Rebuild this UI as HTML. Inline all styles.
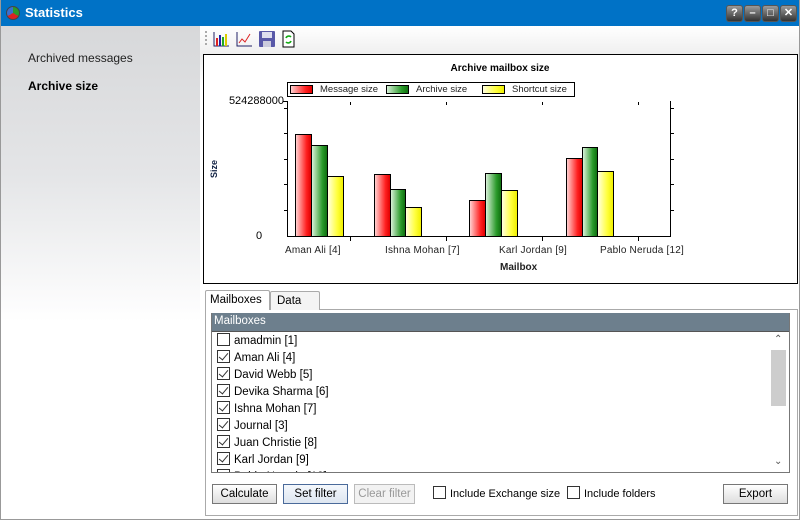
<!DOCTYPE html>
<html><head><style>
*{margin:0;padding:0;box-sizing:border-box}
body{width:800px;height:520px;overflow:hidden;font-family:"Liberation Sans",sans-serif;font-size:11px;color:#000;background:#fff;position:relative}
.a{position:absolute;white-space:nowrap}
#win{left:0;top:0;width:800px;height:520px;border:1px solid #999;border-top:none}
#title{left:0;top:0;width:800px;height:26px;background:#0072c6;color:#fff;font-weight:bold;font-size:13px}
#left{left:1px;top:26px;width:199px;height:493px;background:linear-gradient(#d7d8da 0%,#e4e5e7 30%,#fff 60%)}
#right{left:200px;top:26px;width:599px;height:493px;background:linear-gradient(#fff,#eee 30px,#fff 60px)}
.tb{width:17px;height:17px;top:5px;border-radius:3px;background:linear-gradient(#9a9a9a,#333);border:1px solid #555;color:#fff;font-size:11px;font-weight:bold;text-align:center;line-height:15px}
.bar{position:absolute;border:1px solid #000}
.r{background:linear-gradient(90deg,#ffd0d0,#ff2020 70%,#e00000)}
.g{background:linear-gradient(90deg,#d8f0d8,#2a9a2a 70%,#107010)}
.y{background:linear-gradient(90deg,#ffffe0,#ffff40 60%,#f0f000)}
.row{position:absolute;height:17px;font-size:11.5px;line-height:18px;white-space:nowrap}
.cb{display:inline-block;width:13px;height:13px;border:1px solid #333;vertical-align:-2px;margin-right:4px;background:#fff;position:relative}
.ck::after{content:"";position:absolute;left:3px;top:0px;width:4px;height:8px;border:solid #333;border-width:0 1px 1px 0;transform:rotate(40deg)}
.btn{position:absolute;top:484px;height:20px;border:1px solid #777;background:linear-gradient(#fff,#ddd);text-align:center;line-height:19px;font-size:11.5px;white-space:nowrap}
.tk{position:absolute;background:#000}
.lg{font-size:9.5px;color:#222;top:0}
</style></head><body>
<div id="title" class="a">
 <div class="a" style="left:6px;top:6px;width:14px;height:14px;border-radius:50%;background:conic-gradient(#2a9a2a 0 120deg,#d22 120deg 240deg,#3a6fd0 240deg);border:1px solid #444"></div>
 <div class="a" style="left:25px;top:5px">Statistics</div>
 <div class="a tb" style="left:726px">?</div>
 <div class="a tb" style="left:744px">–</div>
 <div class="a tb" style="left:762px">□</div>
 <div class="a tb" style="left:780px">✕</div>
</div>
<div id="left" class="a">
 <div class="a" style="left:27px;top:25px;font-size:12px;color:#222">Archived messages</div>
 <div class="a" style="left:27px;top:53px;font-size:12px;font-weight:bold">Archive size</div>
</div>
<div id="right" class="a"></div>
<div id="win" class="a"></div>
<div class="a" style="left:205px;top:31px;width:2px;height:14px;border-left:2px dotted #aaa"></div>
<svg class="a" style="left:213px;top:30px" width="90" height="18">
 <path d="M1 2V16H16" stroke="#226" fill="none"/>
 <rect x="3" y="8" width="2" height="8" fill="#d22"/><rect x="6" y="5" width="2" height="11" fill="#22a"/><rect x="9" y="7" width="2" height="9" fill="#2a2"/><rect x="12" y="4" width="2" height="12" fill="#dc0"/>
 <path d="M24 2V16H39" stroke="#226" fill="none"/><path d="M26 13L29 9L32 12L37 4" stroke="#d22" fill="none"/>
 <rect x="46" y="1" width="16" height="16" fill="#5858a8" rx="1"/><rect x="49" y="2" width="10" height="6" fill="#dde"/><rect x="50" y="11" width="8" height="6" fill="#ccd"/>
 <path d="M70 1H78L81 4V17H70Z" fill="#fff" stroke="#000"/><path d="M73 8A3 3 0 0 1 78 7M78 11A3 3 0 0 1 73 12" stroke="#1a1" stroke-width="1.6" fill="none"/>
</svg>
<div class="a" style="left:203px;top:54px;width:595px;height:230px;border:1px solid #000;background:#fff"></div>
<div class="a" style="left:400px;top:63px;width:200px;text-align:center;font-weight:bold;font-size:10px">Archive mailbox size</div>
<div class="a" style="left:287px;top:82px;width:288px;height:15px;border:1px solid #000;line-height:13px">
 <span class="a r" style="left:2px;top:2px;width:23px;height:9px;border:1px solid #000"></span><span class="a lg" style="left:32px">Message size</span>
 <span class="a g" style="left:98px;top:2px;width:23px;height:9px;border:1px solid #000"></span><span class="a lg" style="left:128px">Archive size</span>
 <span class="a y" style="left:194px;top:2px;width:23px;height:9px;border:1px solid #000"></span><span class="a lg" style="left:224px">Shortcut size</span>
</div>
<div class="a" style="left:216px;top:95px;width:68px;text-align:right;font-size:11px">524288000</div>
<div class="a" style="left:256px;top:230px;font-size:11px">0</div>
<div class="a" style="left:205px;top:164px;transform:rotate(-90deg);font-size:9px;font-weight:bold;color:#124">Size</div>
<div class="a" style="left:287px;top:101px;width:384px;height:136px;border-left:1px solid #000;border-bottom:1px solid #000;border-right:1px solid #000"></div>
<div class="tk" style="left:283px;top:101px;width:4px;height:1px"></div>
<div class="tk" style="left:284px;top:108px;width:3px;height:1px"></div><div class="tk" style="left:671px;top:108px;width:3px;height:1px"></div>
<div class="tk" style="left:284px;top:133px;width:3px;height:1px"></div><div class="tk" style="left:671px;top:133px;width:3px;height:1px"></div>
<div class="tk" style="left:284px;top:159px;width:3px;height:1px"></div><div class="tk" style="left:671px;top:159px;width:3px;height:1px"></div>
<div class="tk" style="left:284px;top:184px;width:3px;height:1px"></div><div class="tk" style="left:671px;top:184px;width:3px;height:1px"></div>
<div class="tk" style="left:284px;top:210px;width:3px;height:1px"></div><div class="tk" style="left:671px;top:210px;width:3px;height:1px"></div>
<div class="tk" style="left:350px;top:237px;width:1px;height:4px"></div><div class="tk" style="left:446px;top:237px;width:1px;height:4px"></div>
<div class="tk" style="left:542px;top:237px;width:1px;height:4px"></div><div class="tk" style="left:638px;top:237px;width:1px;height:4px"></div>
<div class="tk" style="left:350px;top:102px;width:1px;height:3px"></div><div class="tk" style="left:446px;top:102px;width:1px;height:3px"></div>
<div class="tk" style="left:542px;top:102px;width:1px;height:3px"></div><div class="tk" style="left:638px;top:102px;width:1px;height:3px"></div>
<div class="bar r" style="left:295px;top:134px;width:17px;height:103px"></div>
<div class="bar g" style="left:311px;top:145px;width:17px;height:92px"></div>
<div class="bar y" style="left:327px;top:176px;width:17px;height:61px"></div>
<div class="bar r" style="left:374px;top:174px;width:17px;height:63px"></div>
<div class="bar g" style="left:390px;top:189px;width:16px;height:48px"></div>
<div class="bar y" style="left:405px;top:207px;width:17px;height:30px"></div>
<div class="bar r" style="left:469px;top:200px;width:17px;height:37px"></div>
<div class="bar g" style="left:485px;top:173px;width:17px;height:64px"></div>
<div class="bar y" style="left:501px;top:190px;width:17px;height:47px"></div>
<div class="bar r" style="left:566px;top:158px;width:17px;height:79px"></div>
<div class="bar g" style="left:582px;top:147px;width:16px;height:90px"></div>
<div class="bar y" style="left:597px;top:171px;width:17px;height:66px"></div>
<div class="a" style="left:285px;top:245px;font-size:10px;color:#222;letter-spacing:0.2px">Aman Ali [4]</div>
<div class="a" style="left:385px;top:245px;font-size:10px;color:#222;letter-spacing:0.2px">Ishna Mohan [7]</div>
<div class="a" style="left:499px;top:245px;font-size:10px;color:#222;letter-spacing:0.2px">Karl Jordan [9]</div>
<div class="a" style="left:600px;top:245px;font-size:10px;color:#222;letter-spacing:0.2px">Pablo Neruda [12]</div>
<div class="a" style="left:500px;top:262px;font-size:10px;font-weight:bold;color:#222">Mailbox</div>
<div class="a" style="left:205px;top:309px;width:593px;height:207px;border:1px solid #aaa;background:#fff"></div>
<div class="a" style="left:270px;top:291px;width:50px;height:19px;border:1px solid #aaa;border-bottom:none;border-radius:2px 2px 0 0;background:#f4f4f4;font-size:11.5px;padding:3px 0 0 6px">Data</div>
<div class="a" style="left:205px;top:290px;width:65px;height:20px;border:1px solid #aaa;border-bottom:none;border-radius:2px 2px 0 0;background:#fff;font-size:11.5px;padding:3px 0 0 4px">Mailboxes</div>
<div class="a" style="left:211px;top:313px;width:579px;height:160px;border:1px solid #777;background:#fff"></div>
<div class="a" style="left:212px;top:313px;width:577px;height:18px;background:#6d7f8d;color:#fff;font-size:11.5px;padding:2px 0 0 2px">Mailboxes</div>
<div class="a" style="left:212px;top:331px;width:577px;height:1px;background:#555"></div>
<div class="a" style="left:771px;top:350px;width:15px;height:56px;background:#cdcdcd"></div>
<div class="a" style="left:774px;top:334px;font-size:10px;color:#555">&#8963;</div>
<div class="a" style="left:774px;top:456px;font-size:10px;color:#555">&#8964;</div>
<div style="position:absolute;left:212px;top:332px;width:558px;height:140px;overflow:hidden">
<div class="row" style="left:5px;top:0px"><span class="cb"></span>amadmin [1]</div>
<div class="row" style="left:5px;top:17px"><span class="cb ck"></span>Aman Ali [4]</div>
<div class="row" style="left:5px;top:34px"><span class="cb ck"></span>David Webb [5]</div>
<div class="row" style="left:5px;top:51px"><span class="cb ck"></span>Devika Sharma [6]</div>
<div class="row" style="left:5px;top:68px"><span class="cb ck"></span>Ishna Mohan [7]</div>
<div class="row" style="left:5px;top:85px"><span class="cb ck"></span>Journal [3]</div>
<div class="row" style="left:5px;top:102px"><span class="cb ck"></span>Juan Christie [8]</div>
<div class="row" style="left:5px;top:119px"><span class="cb ck"></span>Karl Jordan [9]</div>
<div class="row" style="left:5px;top:136px"><span class="cb ck"></span>Pablo Neruda [12]</div>
</div>
<div class="btn" style="left:212px;width:65px">Calculate</div>
<div class="btn" style="left:283px;width:65px;border-color:#4a6a9a;background:linear-gradient(#f4f8fc,#dde6f0)">Set filter</div>
<div class="btn" style="left:354px;width:61px;border-color:#bbb;color:#999;background:#f2f2f2">Clear filter</div>
<div class="a" style="left:433px;top:486px;font-size:11px"><span class="cb"></span>Include Exchange size</div>
<div class="a" style="left:567px;top:486px;font-size:11px"><span class="cb"></span>Include folders</div>
<div class="btn" style="left:723px;width:65px">Export</div>
</body></html>
